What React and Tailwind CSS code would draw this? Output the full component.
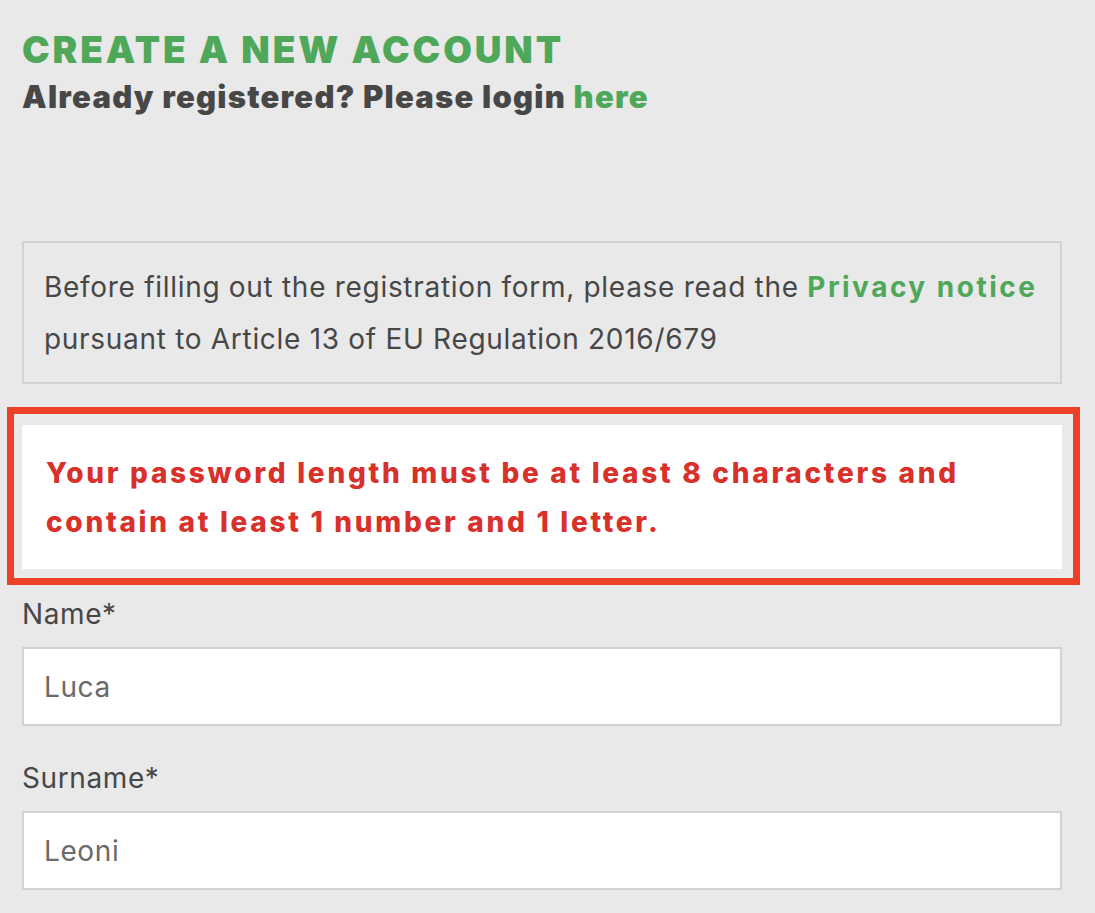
import React from "react";

const Field = ({ label, value, className }) => (
  <div className={className}>
    <label className="block text-[28px] leading-[36px] tracking-[0.6px] text-[#474747]">{label}</label>
    <div className="mt-[15px] h-[79px] border-2 border-[#d2d2d2] bg-white flex items-center pl-[20px]">
      <span className="text-[28px] tracking-[0.6px] text-[#6a6a6a]">{value}</span>
    </div>
  </div>
);

export default function App() {
  return (
    <div
      className="min-h-screen bg-[#e9e9e9] pt-[31px] pl-[22px]"
      style={{ fontFamily: "Inter, Lato, sans-serif" }}
    >
      <div className="w-[1040px]">
        <h1 className="text-[37px] leading-none font-black tracking-[2.9px] text-[#4fa75a] uppercase">
          Create a new account
        </h1>
        <p className="mt-[13px] text-[31px] leading-none font-black tracking-[1.25px] text-[#474747]">
          Already registered? Please login <a className="text-[#4fa75a]">here</a>
        </p>

        <div className="mt-[129px] border-2 border-[#d2d2d2] pt-[18px] pb-[17px] pl-[20px] pr-[6px] text-[28px] leading-[52px] tracking-[0.7px] text-[#474747]">
          <span className="whitespace-nowrap">
            Before filling out the registration form, please read the{" "}
            <a className="font-bold tracking-[2.5px] text-[#4fa75a]">Privacy notice</a>
          </span>
          <br />
          pursuant to Article 13 of EU Regulation 2016/679
        </div>

        <div className="mt-[23px] -ml-[15px] -mr-[18px] border-[7px] border-[#ec4126] pt-[11px] pl-[8px] pr-[11px] pb-[9px]">
          <div className="bg-white h-[144px] flex items-center pl-[24px]">
            <p className="mt-[2px] text-[28px] leading-[49px] font-extrabold tracking-[2.7px] text-[#d8302a]">
              Your password length must be at least 8 characters and
              <br />
              contain at least 1 number and 1 letter.
            </p>
          </div>
        </div>

        <Field label="Name*" value="Luca" className="mt-[11px]" />
        <Field label="Surname*" value="Leoni" className="mt-[34px]" />
      </div>
    </div>
  );
}
